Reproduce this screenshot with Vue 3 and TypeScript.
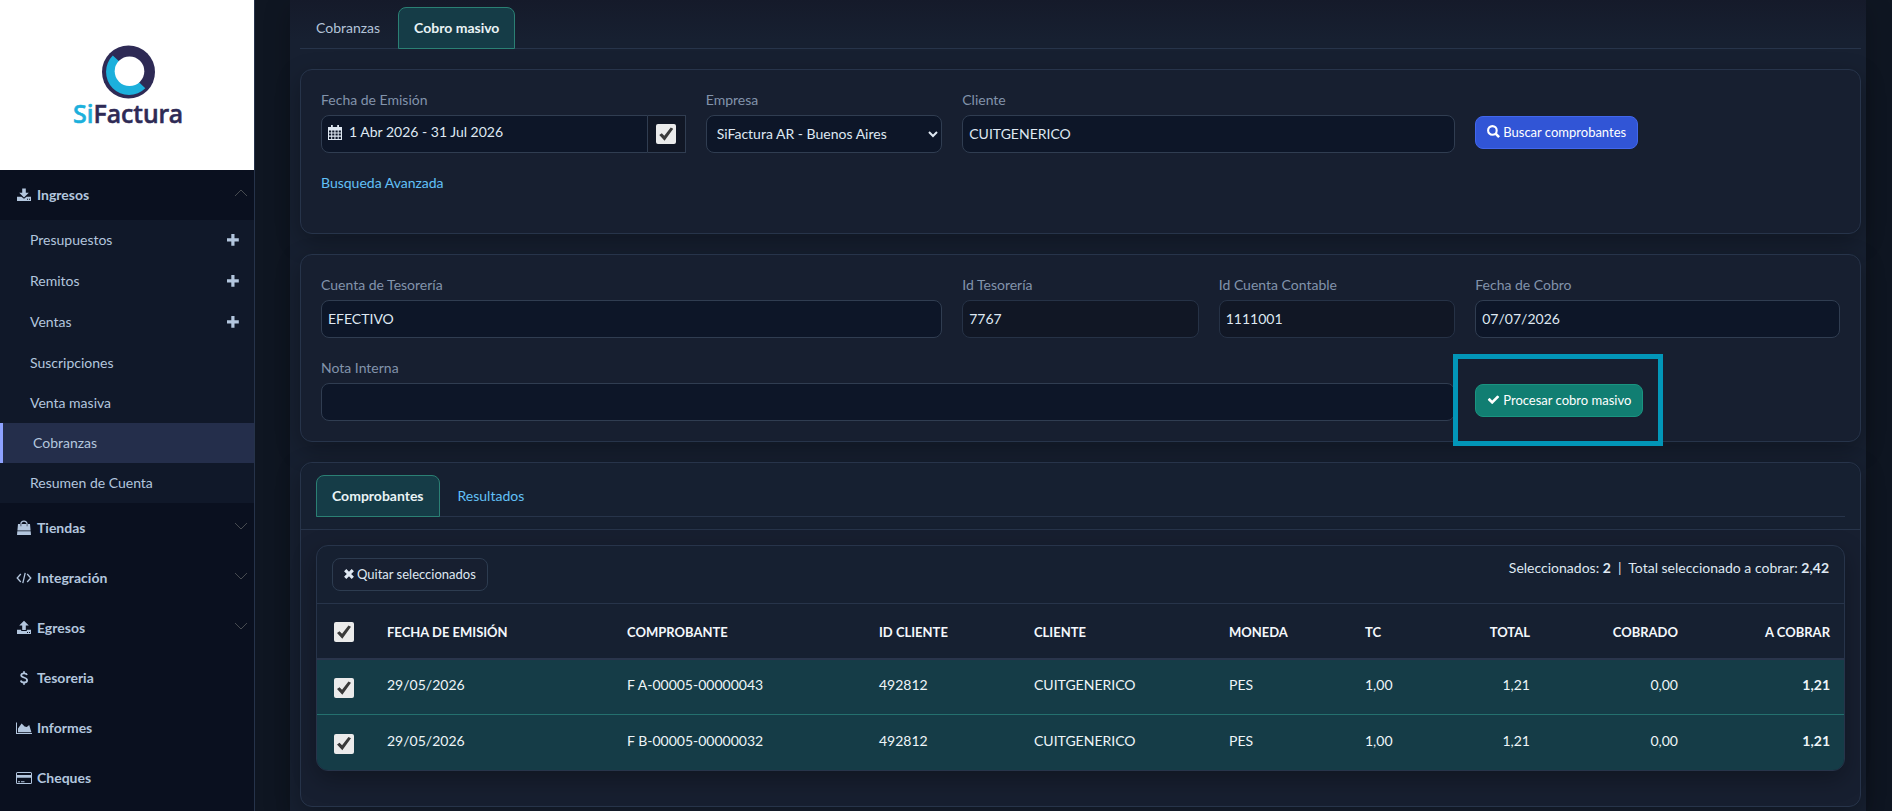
<script setup lang="ts">
import { ref, computed } from 'vue'

interface SubItem { label: string; add?: boolean; active?: boolean }
interface Section { label: string; icon: string; toggle?: 'open' | 'closed'; items?: SubItem[] }
interface Voucher {
  id: number
  date: string
  code: string
  clientId: string
  client: string
  currency: string
  rate: string
  total: number
  paid: number
  due: number
  selected: boolean
}

const sections: Section[] = [
  {
    label: 'Ingresos',
    icon: 'download',
    toggle: 'open',
    items: [
      { label: 'Presupuestos', add: true },
      { label: 'Remitos', add: true },
      { label: 'Ventas', add: true },
      { label: 'Suscripciones' },
      { label: 'Venta masiva' },
      { label: 'Cobranzas', active: true },
      { label: 'Resumen de Cuenta' },
    ],
  },
  { label: 'Tiendas', icon: 'bag', toggle: 'closed' },
  { label: 'Integración', icon: 'code', toggle: 'closed' },
  { label: 'Egresos', icon: 'upload', toggle: 'closed' },
  { label: 'Tesoreria', icon: 'dollar' },
  { label: 'Informes', icon: 'chart' },
  { label: 'Cheques', icon: 'card' },
]

const vouchers = ref<Voucher[]>([
  { id: 1, date: '29/05/2026', code: 'F A-00005-00000043', clientId: '492812', client: 'CUITGENERICO', currency: 'PES', rate: '1,00', total: 1.21, paid: 0, due: 1.21, selected: true },
  { id: 2, date: '29/05/2026', code: 'F B-00005-00000032', clientId: '492812', client: 'CUITGENERICO', currency: 'PES', rate: '1,00', total: 1.21, paid: 0, due: 1.21, selected: true },
])

const useDates = ref(true)
const company = ref('SiFactura AR - Buenos Aires')
const client = ref('CUITGENERICO')
const account = ref('EFECTIVO')
const treasuryId = ref('7767')
const ledgerId = ref('1111001')
const chargeDate = ref('07/07/2026')
const note = ref('')

const money = (n: number): string => n.toFixed(2).replace('.', ',')
const selected = computed(() => vouchers.value.filter((v) => v.selected))
const selectedTotal = computed(() => money(selected.value.reduce((sum, v) => sum + v.due, 0)))
const allSelected = computed({
  get: () => vouchers.value.length > 0 && selected.value.length === vouchers.value.length,
  set: (on: boolean) => vouchers.value.forEach((v) => { v.selected = on }),
})
const removeSelected = (): void => {
  vouchers.value = vouchers.value.filter((v) => !v.selected)
}
</script>

<template>
  <div class="layout">
    <aside class="sidebar">
      <a class="brand" href="#" aria-label="SiFactura">
        <svg class="logo" width="120" height="90" viewBox="0 0 120 90">
          <circle cx="60.500" cy="31" r="26.500" fill="#2e2a55" />
          <path d="M44.800 14.600 A23 23 0 1 0 77.300 47.200 L71 41.200 L50.800 20 Z" fill="#1cb0dc" />
          <circle cx="61.500" cy="30.200" r="14.800" fill="#fff" />
          <text x="60" y="82" text-anchor="middle" class="wordmark"><tspan class="cyan">Si</tspan><tspan class="navy">Factura</tspan></text>
        </svg>
      </a>
      <nav>
        <template v-for="section in sections" :key="section.label">
          <a class="section" href="#">
            <svg class="icon" width="16" height="16" viewBox="0 0 16 16" fill="currentColor" aria-hidden="true">
              <path v-if="section.icon === 'download'" fill-rule="evenodd" d="M6.200 1.500h3.600v4.200h3L8 10.500 3.200 5.700h3z M1 9.800h4.400l2.600 2 2.600-2H15V14H1z M11 11.800v1h1v-1z M13 11.800v1h1v-1z" />
              <path v-else-if="section.icon === 'upload'" fill-rule="evenodd" d="M8 .8l4.800 4.800H9.800v4.400H6.200V5.600H3.200z M1 9.800h4.200v1.300h5.600V9.800H15V14H1z M11 12v1h1v-1z M13 12v1h1v-1z" />
              <g v-else-if="section.icon === 'bag'">
                <path d="M4.900 6.500V4.200a3.100 3.100 0 0 1 6.200 0v2.300" fill="none" stroke="currentColor" stroke-width="1.200" />
                <path d="M2 3.900h12l.6 6.600H1.400z M1.300 11.200h13.400L15 15H1z" />
                <path d="M4.900 4v2.300M11.100 4v2.300" stroke="#0b1120" stroke-width="1" opacity=".6" />
              </g>
              <path v-else-if="section.icon === 'code'" d="M4.800 4L1.200 8l3.600 4M11.200 4l3.600 4-3.600 4M9.200 2.800L6.800 13.200" fill="none" stroke="currentColor" stroke-width="1.300" />
              <path v-else-if="section.icon === 'dollar'" d="M11 5C10.600 3.700 9.500 3.300 8 3.300 6.300 3.300 5.200 4 5.200 5.300 5.200 8.200 11.100 6.800 11.100 10.200 11.100 11.600 9.900 12.500 8 12.500 6.300 12.500 5.100 11.900 4.800 10.500M8 1.200V3.500M8 12.300V14.700" fill="none" stroke="currentColor" stroke-width="1.800" />
              <path v-else-if="section.icon === 'chart'" d="M0 2.500h1v10.600h15V14H0z M2 12.200V8.500L5.600 3.600 8.600 6.400 10.800 7 13.200 5 15.400 12.200z" />
              <path v-else fill-rule="evenodd" d="M1.500 2h13A1.500 1.500 0 0 1 16 3.500v9A1.500 1.500 0 0 1 14.500 14h-13A1.500 1.500 0 0 1 0 12.500v-9A1.500 1.500 0 0 1 1.500 2z M1 3v2h14V3z M1 7.800V13h14V7.800z M2 11.200h2v1H2z M5 11.200h3.500v1H5z" />
            </svg>
            <span>{{ section.label }}</span>
            <svg v-if="section.toggle" class="chevron" width="14" height="8" viewBox="0 0 14 8" aria-hidden="true">
              <path :d="section.toggle === 'open' ? 'M1 7L7 1l6 6' : 'M1 1l6 6 6-6'" fill="none" stroke="#474b50" stroke-width="1" />
            </svg>
          </a>
          <ul v-if="section.items" class="submenu">
            <li v-for="item in section.items" :key="item.label" :class="{ tall: item.add, active: item.active }">
              <a href="#">{{ item.label }}</a>
              <button v-if="item.add" type="button" class="add" :aria-label="'Agregar ' + item.label">
                <svg width="12" height="12" viewBox="0 0 12 12" fill="currentColor"><path d="M4.300 0h3.200v4.300h4.300v3.200H7.500v4.300H4.300V7.500H0V4.300h4.300z" /></svg>
              </button>
            </li>
          </ul>
        </template>
      </nav>
    </aside>

    <main class="main">
      <div class="panel">
        <nav class="tabs">
          <a href="#" class="tab">Cobranzas</a>
          <a href="#" class="tab current">Cobro masivo</a>
        </nav>

        <section class="card search">
          <div class="grid">
            <div class="field w3">
              <label for="range">Fecha de Emisión</label>
              <div class="group">
                <button id="range" type="button" class="range">
                  <svg width="14" height="15" viewBox="0 0 14 15" fill="currentColor" aria-hidden="true">
                    <path fill-rule="evenodd" d="M3 0h1.800v2H9.200V0H11v2h3v13H0V2h3z M1 5.400v2.100h2.200V5.400z M4.200 5.400v2.100h2.200V5.400z M7.500 5.400v2.100h2.200V5.400z M10.700 5.400v2.100h2.200V5.400z M1 8.500v2.100h2.200V8.500z M4.200 8.500v2.100h2.200V8.500z M7.500 8.500v2.100h2.200V8.500z M10.700 8.500v2.100h2.200V8.500z M1 11.700V14h2.200v-2.300z M4.200 11.700V14h2.200v-2.300z M7.500 11.700V14h2.200v-2.300z M10.700 11.700V14h2.200v-2.300z" />
                  </svg>
                  <span>1 Abr 2026 - 31 Jul 2026</span>
                </button>
                <span class="addon"><input v-model="useDates" type="checkbox" class="check" aria-label="Filtrar por fecha" /></span>
              </div>
            </div>
            <div class="field w2">
              <label for="company">Empresa</label>
              <select id="company" v-model="company" class="control">
                <option>SiFactura AR - Buenos Aires</option>
              </select>
            </div>
            <div class="field w4">
              <label for="client">Cliente</label>
              <input id="client" v-model="client" type="text" class="control" />
            </div>
            <div class="action w3">
              <button type="button" class="btn primary">
                <svg width="13" height="13" viewBox="0 0 13 13" fill="none" stroke="currentColor" aria-hidden="true"><circle cx="5.400" cy="5.400" r="4.300" stroke-width="2.100" /><path d="M8.600 8.600l3.500 3.500" stroke-width="2.600" /></svg>
                Buscar comprobantes
              </button>
            </div>
          </div>
          <a href="#" class="link">Busqueda Avanzada</a>
        </section>

        <section class="card">
          <div class="grid">
            <div class="field w5">
              <label for="account">Cuenta de Tesorería</label>
              <input id="account" v-model="account" type="text" class="control" />
            </div>
            <div class="field w2">
              <label for="treasury">Id Tesorería</label>
              <input id="treasury" v-model="treasuryId" type="text" class="control" readonly />
            </div>
            <div class="field w2">
              <label for="ledger">Id Cuenta Contable</label>
              <input id="ledger" v-model="ledgerId" type="text" class="control" readonly />
            </div>
            <div class="field w3">
              <label for="chargeDate">Fecha de Cobro</label>
              <input id="chargeDate" v-model="chargeDate" type="text" class="control" />
            </div>
            <div class="field w9">
              <label for="note">Nota Interna</label>
              <input id="note" v-model="note" type="text" class="control" />
            </div>
            <div class="action w3">
              <div class="marked">
                <button type="button" class="btn success">
                  <svg width="13" height="13" viewBox="0 0 1792 1792" fill="currentColor" aria-hidden="true"><path d="M1671 566q0 40-28 68l-724 724-136 136q-28 28-68 28t-68-28l-136-136-362-362q-28-28-28-68t28-68l136-136q28-28 68-28t68 28l294 295 656-657q28-28 68-28t68 28l136 136q28 28 28 68z" /></svg>
                  Procesar cobro masivo
                </button>
              </div>
            </div>
          </div>
        </section>

        <section class="card results">
          <header class="results-head">
            <nav class="tabs inner">
              <a href="#" class="tab current">Comprobantes</a>
              <a href="#" class="tab blue">Resultados</a>
            </nav>
          </header>
          <div class="sheet">
            <div class="toolbar">
              <button type="button" class="btn ghost" @click="removeSelected">
                <svg width="10" height="10" viewBox="0 0 10 10" fill="none" stroke="currentColor" stroke-width="3.200" aria-hidden="true"><path d="M1.200 1.200l7.600 7.600M8.800 1.200L1.200 8.800" /></svg>
                Quitar seleccionados
              </button>
              <p class="summary">Seleccionados: <b>{{ selected.length }}</b> &nbsp;|&nbsp; Total seleccionado a cobrar: <b>{{ selectedTotal }}</b></p>
            </div>
            <table>
              <colgroup>
                <col class="c-check" /><col class="c-date" /><col class="c-code" /><col class="c-id" /><col class="c-client" />
                <col class="c-cur" /><col class="c-rate" /><col class="c-total" /><col class="c-paid" /><col class="c-due" />
              </colgroup>
              <thead>
                <tr>
                  <th><input v-model="allSelected" type="checkbox" class="check" aria-label="Seleccionar todos" /></th>
                  <th>FECHA DE EMISIÓN</th>
                  <th>COMPROBANTE</th>
                  <th>ID CLIENTE</th>
                  <th>CLIENTE</th>
                  <th>MONEDA</th>
                  <th>TC</th>
                  <th class="num">TOTAL</th>
                  <th class="num">COBRADO</th>
                  <th class="num">A COBRAR</th>
                </tr>
              </thead>
              <tbody>
                <tr v-for="v in vouchers" :key="v.id" :class="{ picked: v.selected }">
                  <td><input v-model="v.selected" type="checkbox" class="check" :aria-label="'Seleccionar ' + v.code" /></td>
                  <td>{{ v.date }}</td>
                  <td>{{ v.code }}</td>
                  <td>{{ v.clientId }}</td>
                  <td>{{ v.client }}</td>
                  <td>{{ v.currency }}</td>
                  <td>{{ v.rate }}</td>
                  <td class="num">{{ money(v.total) }}</td>
                  <td class="num">{{ money(v.paid) }}</td>
                  <td class="num"><b>{{ money(v.due) }}</b></td>
                </tr>
              </tbody>
            </table>
          </div>
        </section>
      </div>
    </main>
  </div>
</template>

<style>
html,
body {
  background: #0f1622;
}
body {
  margin: 0;
}
</style>

<style scoped>
* {
  box-sizing: border-box;
}
.layout {
  display: flex;
  height: 100vh;
  overflow: hidden;
  font-family: "Lato", "Liberation Sans", sans-serif;
  font-size: 14px;
  line-height: 20px;
  color: #dfe8f2;
}
a {
  color: inherit;
  text-decoration: none;
}
button,
input,
select {
  font: inherit;
  color: inherit;
}

/* Sidebar */
.sidebar {
  flex: 0 0 255px;
  overflow: hidden;
  border-right: 1px solid #26334a;
  background: #0a101f;
  color: #b3c6de;
}
.brand {
  display: flex;
  align-items: center;
  justify-content: center;
  height: 170px;
  padding: 2px 0 0 2px;
  background: #fff;
}
.wordmark {
  font-family: "Noto Sans", "Open Sans", sans-serif;
  font-size: 25px;
  font-weight: 500;
  stroke-width: 0.6px;
}
.cyan {
  fill: #1cb0dc;
  stroke: #1cb0dc;
}
.navy {
  fill: #2e2a55;
  stroke: #2e2a55;
}
.section {
  display: flex;
  align-items: center;
  height: 50px;
  padding: 0 6px 0 16px;
  font-weight: 700;
}
.icon {
  flex: none;
  margin-right: 5px;
}
.chevron {
  margin: 0 0 5px auto;
}
.submenu {
  margin: 0;
  padding: 0;
  list-style: none;
  background: #101829;
}
.submenu li {
  display: flex;
  align-items: center;
  justify-content: space-between;
  height: 40px;
  padding: 0 15px 0 30px;
}
.submenu li.tall {
  height: 41px;
  padding-bottom: 1px;
}
.submenu li.active {
  border-left: 3px solid #8ea2ff;
  background: #242e4b;
}
.add {
  display: flex;
  padding: 0;
  border: 0;
  background: none;
}

/* Content */
.main {
  flex: 1;
  min-width: 0;
  padding: 0 26px 0 35px;
}
.panel {
  min-height: 100%;
  padding: 7px 5px 4px 10px;
  background: linear-gradient(#151a2a, #172031 40px, #172031);
  box-shadow: 0 8px 24px rgba(0, 0, 0, 0.25);
}
.tabs {
  display: flex;
  gap: 2px;
  height: 42px;
  border-bottom: 1px solid #27344a;
}
.tab {
  height: 42px;
  padding: 10px 15px;
  border: 1px solid transparent;
  color: #b3c3d8;
}
.tab.current {
  border-color: #2b8074;
  border-radius: 8px 8px 0 0;
  background: #153c47;
  color: #e9f3f5;
  font-weight: 700;
}
.tab.blue {
  color: #62c0f7;
}
.card {
  margin-top: 20px;
  border: 1px solid #27344a;
  border-radius: 12px;
  background: #171f30;
  box-shadow: 0 8px 24px rgba(0, 0, 0, 0.3);
  padding: 20px;
}
.search {
  min-height: 165px;
}
.grid {
  display: grid;
  grid-template-columns: repeat(12, minmax(0, 1fr));
  gap: 20px;
}
.w2 { grid-column: span 2; }
.w3 { grid-column: span 3; }
.w4 { grid-column: span 4; }
.w5 { grid-column: span 5; }
.w9 { grid-column: span 9; }
.field label {
  display: block;
  height: 25px;
  color: #8293ab;
}
.control {
  display: block;
  width: 100%;
  height: 38px;
  margin: 0;
  padding: 0 6px 2px;
  border: 1px solid #303d51;
  border-radius: 8px;
  background: #0d1628;
  outline: none;
}
.control[readonly] {
  border-color: #263246;
  background: #111725;
}
.group {
  display: flex;
  height: 38px;
}
.range {
  display: flex;
  flex: 1;
  align-items: center;
  gap: 7px;
  padding: 0 6px 4px;
  border: 1px solid #303d51;
  border-radius: 8px 0 0 8px;
  background: #0d1628;
  text-align: left;
}
.addon {
  display: flex;
  align-items: center;
  justify-content: center;
  width: 38px;
  border: 1px solid #303d51;
  border-left: 0;
  background: #111725;
}
.check {
  display: grid;
  place-content: center;
  width: 20px;
  height: 20px;
  margin: 0;
  border: 0;
  border-radius: 2px;
  background: #ebebeb;
  appearance: none;
}
.check:checked::before {
  content: "";
  width: 14px;
  height: 14px;
  background: #3a3a3a;
  clip-path: polygon(0 58%, 18% 44%, 36% 62%, 82% 4%, 100% 12%, 38% 98%);
}
.action {
  padding-top: 26px;
}
.btn {
  display: inline-flex;
  align-items: center;
  gap: 3px;
  height: 33px;
  padding: 0 11px 2px;
  border: 1px solid transparent;
  border-radius: 8px;
  font-size: 13px;
}
.primary {
  border-color: #4267ec;
  background: #3155d6;
  color: #fff;
}
.success {
  border-color: #1a9480;
  background: #117e72;
  color: #fff;
}
.ghost {
  border-color: #2d3c50;
  background: #171f30;
}
.link {
  display: inline-block;
  margin-top: 20px;
  color: #62c0f7;
}
.marked {
  position: relative;
  display: inline-block;
}
.marked::after {
  content: "";
  position: absolute;
  inset: -30px -20px -29px -22px;
  border: 5px solid #0296b8;
  pointer-events: none;
}

/* Results */
.results {
  padding: 0 0 35px;
}
.results-head {
  padding: 12px 15px;
  border-bottom: 1px solid #27344a;
  border-radius: 12px 12px 0 0;
  background: #162031;
}
.sheet {
  margin: 15px 15px 0;
  border: 1px solid #27344a;
  border-radius: 12px;
  background: #162031;
  box-shadow: 0 8px 24px rgba(0, 0, 0, 0.3);
  overflow: hidden;
}
.toolbar {
  display: flex;
  align-items: flex-start;
  justify-content: space-between;
  padding: 12px 15px;
  border-bottom: 1px solid #27344a;
}
.summary {
  margin: 0;
}
table {
  width: 100%;
  table-layout: fixed;
  border-collapse: separate;
  border-spacing: 0;
}
.c-check { width: 55px; }
.c-date { width: 240px; }
.c-code { width: 252px; }
.c-id { width: 155px; }
.c-client { width: 195px; }
.c-cur { width: 136px; }
.c-rate { width: 95px; }
.c-total { width: 100px; }
.c-paid { width: 148px; }
.c-due { width: 152px; }
th,
td {
  padding: 0 15px;
  text-align: left;
}
th {
  height: 56px;
  padding-top: 2px;
  border-bottom: 2px solid #2a354c;
  color: #f4f8fc;
  font-size: 13px;
}
td {
  height: 55px;
  padding-bottom: 4px;
  border-bottom: 1px solid #24706e;
  color: #eef5f8;
}
tr:last-child td {
  border-bottom: 0;
}
th .check,
td .check {
  margin-left: 2px;
}
td .check {
  margin-top: 6px;
}
.picked td {
  background: #153c47;
}
.num {
  text-align: right;
}
</style>
